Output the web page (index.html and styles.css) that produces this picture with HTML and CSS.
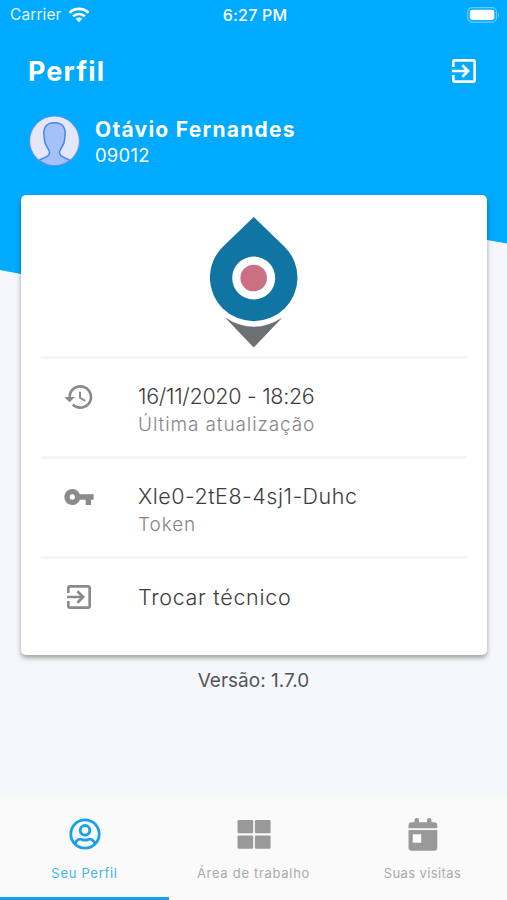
FILE: index.html
```html
<!DOCTYPE html>
<html lang="pt-BR">
<head>
    <meta charset="UTF-8">
    <meta name="viewport" content="width=device-width, initial-scale=1.0">
    <title>Perfil</title>
    <link rel="stylesheet" href="styles.css">
</head>
<body>
    <div class="screen">
        <svg class="wave" viewBox="0 0 507 290" aria-hidden="true">
            <path d="M0 0H507V243.500L487 240C330 215 190 300 21 274L0 270Z" fill="#00aaff"/>
        </svg>

        <div class="status-bar">
            <div class="status-left">
                <span class="carrier">Carrier</span>
                <svg class="wifi" width="22" height="16" viewBox="0 0 22 16">
                    <g fill="none" stroke="#fff" stroke-width="2.700">
                        <path d="M1.600 5.700C7 .600 15 .600 20.400 5.700"/>
                        <path d="M5.100 9.300C8.500 6.200 13.500 6.200 16.900 9.300"/>
                    </g>
                    <path d="M7.600 11.800C9.600 10.100 12.400 10.100 14.400 11.800L11 15.200Z" fill="#fff"/>
                </svg>
            </div>
            <span class="clock">6:27 PM</span>
            <div class="status-right">
                <svg class="battery" width="33" height="16" viewBox="0 0 33 16">
                    <rect x=".700" y=".700" width="28.800" height="14.400" rx="4.500" fill="none" stroke="#fff" stroke-opacity=".4" stroke-width="1.200"/>
                    <rect x="2.800" y="2.800" width="24.600" height="10.200" rx="2.400" fill="#fff"/>
                    <path d="M31 5.500Q33.200 8 31 10.500Z" fill="#fff" fill-opacity=".45"/>
                </svg>
            </div>
        </div>

        <header class="header">
            <h1>Perfil</h1>
            <button class="exit-btn" aria-label="Sair">
                <svg width="32" height="32" viewBox="0 0 24 24" fill="currentColor">
                    <path d="M10.090 15.590L11.500 17l5-5-5-5-1.410 1.410L12.670 11H3v2h9.670l-2.580 2.590zM19 3H5c-1.110 0-2 .9-2 2v4h2V5h14v14H5v-4H3v4c0 1.100.89 2 2 2h14c1.100 0 2-.9 2-2V5c0-1.100-.9-2-2-2z"/>
                </svg>
            </button>
        </header>

        <section class="user">
            <svg class="avatar" width="52" height="52" viewBox="0 0 52 52">
                <circle cx="26.500" cy="26" r="25" fill="#e3e7f8"/>
                <path d="M11 45.500C14 42.500 21.500 43 21.500 37.500C21.500 33.500 16.500 31 16.500 25L15.800 19C15.800 11 19 7.800 26.500 7.800S37.200 11 37.200 19L36.500 25C36.500 31 31.500 33.500 31.500 37.500C31.500 43 39 42.500 42 45.500Q34 51 26.500 51T11 45.500Z" fill="#a4c2f7" stroke="#4387ed" stroke-width="1.500"/>
                <circle cx="26.500" cy="26" r="25" fill="none" stroke="#5792f5" stroke-width="1.200"/>
            </svg>
            <div class="user-info">
                <h2>Otávio Fernandes</h2>
                <p>09012</p>
            </div>
        </section>

        <main class="card">
            <div class="logo">
                <svg width="88" height="131" viewBox="0 0 88 131">
                    <path d="M43.700 0L74.800 30A43.800 43.500 0 1 1 12.600 30Z" fill="#1175a3"/>
                    <circle cx="43.700" cy="61" r="21.500" fill="#fff"/>
                    <circle cx="43.700" cy="61" r="13.300" fill="#cb7083"/>
                    <path d="M15 100.500Q43.700 119 72.400 100.500L43.700 130.500Z" fill="#6d6f73"/>
                </svg>
            </div>
            <div class="row">
                <svg class="row-icon" width="32" height="32" viewBox="0 0 24 24" fill="currentColor">
                    <path d="M13 3c-4.970 0-9 4.030-9 9H1l3.890 3.890.07.140L9 12H6c0-3.870 3.130-7 7-7s7 3.130 7 7-3.130 7-7 7c-1.930 0-3.680-.79-4.940-2.060l-1.420 1.420C8.270 19.990 10.510 21 13 21c4.970 0 9-4.030 9-9s-4.030-9-9-9zm-1 5v5l4.280 2.540.72-1.210-3.500-2.080V8H12z"/>
                </svg>
                <div class="row-text">
                    <p class="row-title date">16/11/2020 - 18:26</p>
                    <p class="row-sub">Última atualização</p>
                </div>
            </div>
            <div class="row">
                <svg class="row-icon" width="32" height="32" viewBox="0 0 24 24" fill="currentColor">
                    <path d="M12.650 10C11.830 7.670 9.610 6 7 6c-3.310 0-6 2.690-6 6s2.690 6 6 6c2.610 0 4.830-1.670 5.650-4H17v4h4v-4h2v-4H12.650zM7 14c-1.100 0-2-.9-2-2s.9-2 2-2 2 .9 2 2-.9 2-2 2z"/>
                </svg>
                <div class="row-text">
                    <p class="row-title token">Xle0-2tE8-4sj1-Duhc</p>
                    <p class="row-sub">Token</p>
                </div>
            </div>
            <div class="row">
                <svg class="row-icon" width="32" height="32" viewBox="0 0 24 24" fill="currentColor">
                    <path d="M10.090 15.590L11.500 17l5-5-5-5-1.410 1.410L12.670 11H3v2h9.670l-2.580 2.590zM19 3H5c-1.110 0-2 .9-2 2v4h2V5h14v14H5v-4H3v4c0 1.100.89 2 2 2h14c1.100 0 2-.9 2-2V5c0-1.100-.9-2-2-2z"/>
                </svg>
                <div class="row-text">
                    <p class="row-title change">Trocar técnico</p>
                </div>
            </div>
        </main>

        <p class="version">Versão: 1.7.0</p>

        <nav class="tabs">
            <a class="tab active">
                <svg width="36" height="36" viewBox="0 0 36 36" fill="none" stroke="currentColor" stroke-width="2.800">
                    <circle cx="18" cy="18" r="14.200"/>
                    <circle cx="18" cy="14.300" r="4.800"/>
                    <path d="M8 27.500C10 23 13 22.600 15 23.600Q18 24.600 21 23.600C23 22.600 26 23 28 27.500"/>
                </svg>
                <span class="tab-profile">Seu Perfil</span>
            </a>
            <a class="tab">
                <svg width="36" height="36" viewBox="0 0 36 36" fill="currentColor">
                    <rect x="1.500" y="4" width="15.700" height="13.200" rx="1.200"/>
                    <rect x="18.900" y="4" width="15.700" height="13.200" rx="1.200"/>
                    <rect x="1.500" y="19.500" width="15.700" height="13.200" rx="1.200"/>
                    <rect x="18.900" y="19.500" width="15.700" height="13.200" rx="1.200"/>
                </svg>
                <span class="tab-work">Área de trabalho</span>
            </a>
            <a class="tab">
                <svg width="36" height="36" viewBox="0 0 36 36">
                    <path d="M3.500 12.300V9.500Q3.500 6.200 6.800 6.200H9.500V4Q9.500 2 11.800 2T14 4V6.200H22V4Q22 2 24.200 2T26.500 4V6.200H29Q32.300 6.200 32.300 9.500V12.300Z" fill="currentColor"/>
                    <path d="M3.500 14H32.300V31.500Q32.300 34.800 29 34.800H6.800Q3.500 34.800 3.500 31.500Z" fill="currentColor"/>
                    <rect x="7.800" y="18.300" width="8.400" height="8.400" fill="#fff"/>
                </svg>
                <span class="tab-visits">Suas visitas</span>
            </a>
        </nav>
    </div>
</body>
</html>
```
FILE: styles.css
```css
* {
    margin: 0;
    padding: 0;
    box-sizing: border-box;
}

body {
    font-family: Inter, 'Open Sans', sans-serif;
    background-color: #f5f7fa;
    color: #3d3d3d;
}

.screen {
    position: relative;
    z-index: 0;
    width: 507px;
    height: 900px;
    display: flex;
    flex-direction: column;
    overflow: hidden;
}

/* blue shape behind the header and the card */
.wave {
    position: absolute;
    top: 0;
    left: 0;
    width: 507px;
    height: 290px;
    z-index: -1;
}

/* Status bar */
.status-bar {
    height: 29px;
    padding: 0 7px 0 10px;
    display: grid;
    grid-template-columns: 1fr auto 1fr;
    align-items: center;
    color: #fff;
    font-size: 16px;
    line-height: 20px;
}

.status-left {
    display: flex;
    align-items: center;
    gap: 6px;
    color: #e3f5ff;
}

.carrier {
    font-size: 15.5px;
    letter-spacing: 0.1px;
}

.clock {
    font-weight: 500;
    letter-spacing: 0.2px;
}

.status-right {
    display: flex;
    justify-content: flex-end;
}

/* Header */
.header {
    height: 83px;
    padding: 0 27px 0 28px;
    display: flex;
    justify-content: space-between;
    align-items: center;
    color: #fff;
}

.header h1 {
    padding-top: 1px;
    font-size: 27px;
    font-weight: 700;
    letter-spacing: 1.1px;
}

.exit-btn {
    width: 32px;
    height: 32px;
    border: none;
    background: none;
    color: #fff;
}

.user {
    height: 83px;
    padding: 3px 28px 0;
    display: flex;
    align-items: flex-start;
    gap: 15px;
    color: #fff;
}

.user-info h2 {
    padding-top: 1px;
    font-size: 21px;
    line-height: 27px;
    font-weight: 700;
    letter-spacing: 1.25px;
}

.user-info p {
    font-size: 18.5px;
    line-height: 25px;
    letter-spacing: 0.2px;
}

/* Card */
.card {
    height: 460px;
    margin: 0 20px 0 21px;
    padding: 0 20px;
    background-color: #fff;
    border-radius: 5px;
    box-shadow: 0 3px 5px rgba(0, 0, 0, 0.35);
}

.logo {
    height: 161px;
    padding-top: 22px;
    display: flex;
    justify-content: center;
}

.row {
    height: 100px;
    border-top: 3px solid #f5f5f5;
    padding: 22px 0 0 22px;
    display: flex;
    gap: 43px;
}

.row-icon {
    color: #8b8b8b;
    flex-shrink: 0;
}

.row-title {
    font-size: 21.5px;
    line-height: 30px;
    font-weight: 300;
    white-space: nowrap;
}

.date {
    letter-spacing: -0.3px;
}

.token {
    letter-spacing: 0.5px;
}

.change {
    line-height: 32px;
    letter-spacing: 0.7px;
}

.row-sub {
    font-size: 19px;
    line-height: 28px;
    font-weight: 300;
    letter-spacing: 0.9px;
    color: #858585;
}

.version {
    margin-top: 12px;
    text-align: center;
    font-size: 19px;
    line-height: 28px;
    color: #555;
}

/* Tabs */
.tabs {
    height: 103px;
    margin-top: auto;
    display: grid;
    grid-template-columns: repeat(3, 1fr);
    background-color: #fafafa;
}

.tab {
    padding-top: 19px;
    display: flex;
    flex-direction: column;
    align-items: center;
    gap: 11px;
    color: #999;
    font-size: 13px;
    line-height: 20px;
    border-bottom: 3px solid transparent;
}

.tab span {
    color: #aaa;
    letter-spacing: 0.7px;
}

.tab .tab-visits {
    letter-spacing: 0.4px;
}

.tab.active {
    color: #18a0ee;
    border-bottom-color: #18a0ee;
}

.tab.active span {
    color: #45b4f3;
}
```
